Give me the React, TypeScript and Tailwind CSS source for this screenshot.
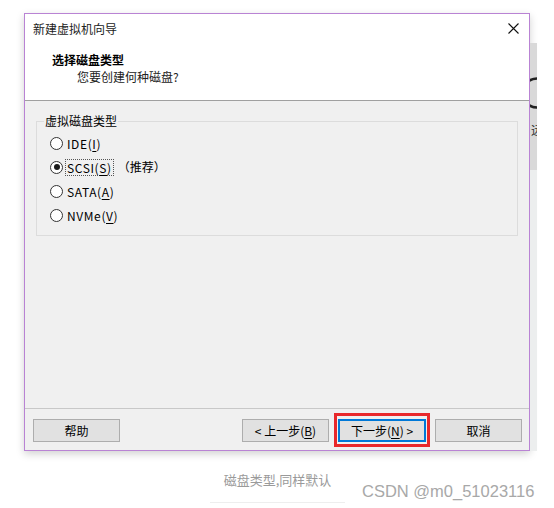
import React from 'react';

const font = { fontFamily: '"Noto Sans CJK SC", "Noto Sans", sans-serif' };

function Radio({ checked }: { checked?: boolean }) {
    return (
        <span className="w-[13px] h-[13px] rounded-full border border-[#333333] bg-white flex items-center justify-center shrink-0">
            {checked && <span className="w-[6px] h-[6px] rounded-full bg-[#1a1a1a]" />}
        </span>
    );
}

function Option({ name, hotkey, checked, focused, extra }: { name: string; hotkey: string; checked?: boolean; focused?: boolean; extra?: string }) {
    return (
        <div className="h-[24px] flex items-center gap-[2px]">
            <Radio checked={checked} />
            <span className={`px-[1px] leading-[15px] tracking-[0.6px] border border-dotted ${focused ? 'border-[#555555]' : 'border-transparent'}`}>
                {name}(<span className="underline underline-offset-2">{hotkey}</span>)
            </span>
            {extra && <span className="ml-[2px]">{extra}</span>}
        </div>
    );
}

function Button({ children, primary }: { children: React.ReactNode; primary?: boolean }) {
    return (
        <div
            className={`h-[23px] flex items-center justify-center bg-[#e1e1e1] text-[12px] text-black ${
                primary ? 'w-[88px] border-2 border-[#0078d7]' : 'w-[87px] border border-[#adadad]'
            }`}
        >
            {children}
        </div>
    );
}

export default function App() {
    return (
        <div className="w-[554px] h-[508px] bg-white overflow-hidden" style={font}>
            <div className="flex pt-[13px] pl-[24px]">
                {/* wizard dialog */}
                <div className="w-[506px] h-[438px] border border-[#b983d4] bg-[#f0f0f0] flex flex-col shadow-[0_3px_8px_rgba(0,0,0,0.18)] text-[12px] text-black">
                    <div className="h-[87px] bg-white border-b border-[#a0a0a0] flex flex-col">
                        <div className="flex items-center justify-between pt-[7px] pl-[8px] pr-[10px] h-[23px]">
                            <span className="leading-[16px] text-[#222222]">新建虚拟机向导</span>
                            <svg width="11" height="11" viewBox="0 0 11 11" className="mt-[-2px]">
                                <path d="M0.5 0.5 L10.5 10.5 M10.5 0.5 L0.5 10.5" stroke="#111111" strokeWidth="1.1" />
                            </svg>
                        </div>
                        <div className="mt-[15px] pl-[27px] font-bold leading-[16px]">选择磁盘类型</div>
                        <div className="mt-[1px] pl-[52px] leading-[16px] text-[#222222]">您要创建何种磁盘?</div>
                    </div>

                    <div className="flex-1 pt-[20px] px-[11px]">
                        <div className="relative border border-[#dcdcdc] pt-[9px] pb-[8px] pl-[13px]">
                            <span className="absolute -top-[9px] left-[7px] px-[1px] bg-[#f0f0f0] leading-[16px]">虚拟磁盘类型</span>
                            <Option name="IDE" hotkey="I" />
                            <Option name="SCSI" hotkey="S" checked focused extra="（推荐）" />
                            <Option name="SATA" hotkey="A" />
                            <Option name="NVMe" hotkey="V" />
                        </div>
                    </div>

                    <div className="h-[42px] border-t border-[#c8c8c8] flex items-start justify-between pt-[10px] pl-[8px] pr-[7px]">
                        <Button>帮助</Button>
                        <div className="flex gap-[9px]">
                            <Button>
                                &lt; 上一步(<span className="underline underline-offset-2">B</span>)
                            </Button>
                            <div className="relative">
                                <Button primary>
                                    下一步(<span className="underline underline-offset-2">N</span>) &gt;
                                </Button>
                                <div className="absolute -left-[4px] -right-[4px] -top-[6px] -bottom-[5px] border-[3px] border-[#e8282b] pointer-events-none" />
                            </div>
                            <Button>取消</Button>
                        </div>
                    </div>
                </div>

                {/* edge of window behind */}
                <div className="w-[7px] flex flex-col mt-[30px]">
                    <div className="h-[127px] bg-[#d9d9d9] overflow-hidden flex flex-col">
                        <svg width="7" height="34" viewBox="0 0 7 34" className="mt-[33px] shrink-0">
                            <path d="M7 2.5 A14.5 14.5 0 0 0 7 31.5" fill="none" stroke="#222222" strokeWidth="2.5" />
                        </svg>
                        <span className="mt-[14px] ml-[1px] text-[12px] leading-[12px] text-[#333333] whitespace-nowrap">远</span>
                    </div>
                    <div className="h-[281px] bg-[#eceeee]" />
                </div>
            </div>

            <div className="flex items-start pl-[210px] mt-[20px]">
                <div className="w-[135px] flex flex-col items-center">
                    <span className="text-[13px] leading-[18px] text-[#9a9a9a]">磁盘类型,同样默认</span>
                    <div className="mt-[13px] w-full h-px bg-[#eeeeee]" />
                </div>
                <span
                    className="ml-[17px] mt-[10px] text-[16.5px] leading-[20px] text-[#a8a8a8] whitespace-nowrap"
                    style={{ fontFamily: '"Liberation Sans", Arial, sans-serif' }}
                >
                    CSDN @m0_51023116
                </span>
            </div>
        </div>
    );
}
